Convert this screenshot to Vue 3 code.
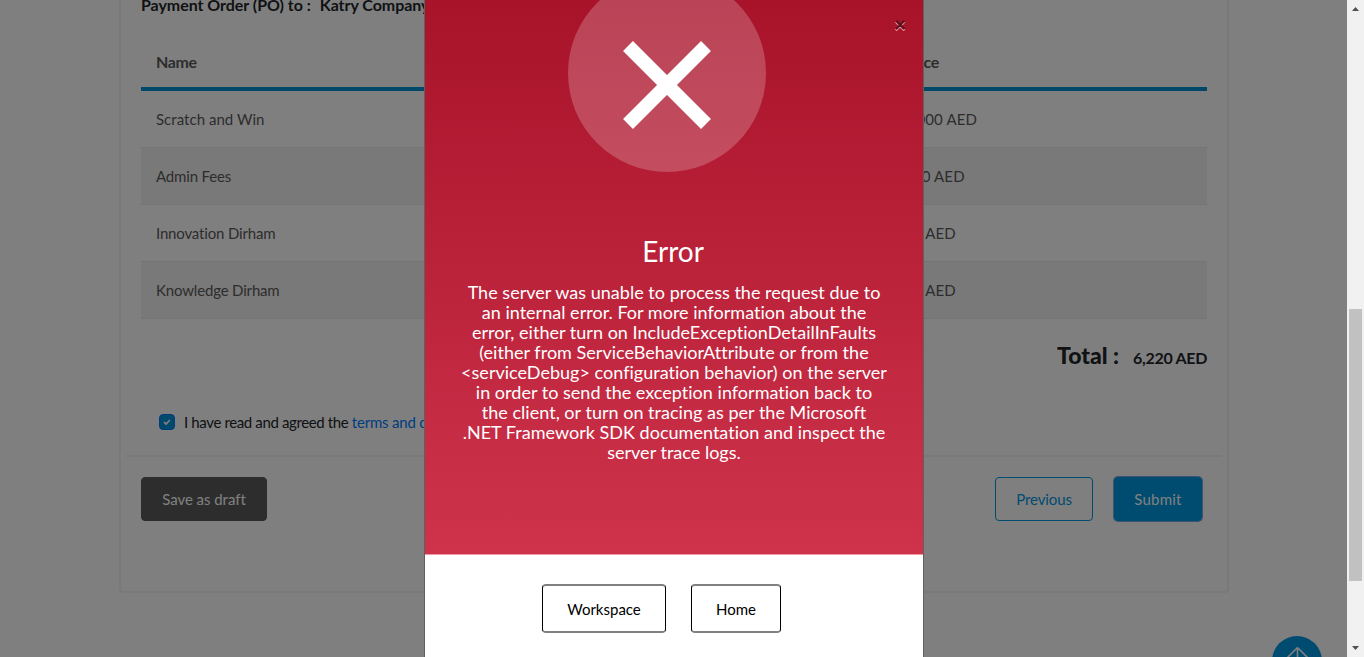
<script setup>
const rows = [
  { name: 'Scratch and Win', price: '6,000 AED' },
  { name: 'Admin Fees', price: '200 AED' },
  { name: 'Innovation Dirham', price: '10 AED' },
  { name: 'Knowledge Dirham', price: '10 AED' }
]
const message = [
  'The server was unable to process the request due to',
  'an internal error. For more information about the',
  'error, either turn on IncludeExceptionDetailInFaults',
  '(either from ServiceBehaviorAttribute or from the',
  '<serviceDebug> configuration behavior) on the server',
  'in order to send the exception information back to',
  'the client, or turn on tracing as per the Microsoft',
  '.NET Framework SDK documentation and inspect the',
  'server trace logs.'
]
</script>

<template>
  <div class="screen">
    <main class="page">
      <section class="card">
        <h2 class="heading"><span>Payment Order (PO) to :</span><span>Katry Company</span></h2>
        <table class="items">
          <thead>
            <tr><th class="name">Name</th><th class="cost">Price</th></tr>
          </thead>
          <tbody>
            <tr v-for="row in rows" :key="row.name">
              <td>{{ row.name }}</td>
              <td class="price">{{ row.price }}</td>
            </tr>
          </tbody>
        </table>
        <div class="total"><strong>Total :</strong><span>6,220 AED</span></div>
        <div class="terms">
          <span class="check">
            <svg viewBox="0 0 16 16" width="16" height="16"><path d="M4.6 8.2 L7 10.3 L11.3 5.7" fill="none" stroke="#fff" stroke-width="2" /></svg>
          </span>
          <span>I have read and agreed the <a>terms and conditions</a></span>
        </div>
        <hr class="rule" />
        <div class="actions">
          <button class="btn draft">Save as draft</button>
          <button class="btn previous">Previous</button>
          <button class="btn submit">Submit</button>
        </div>
      </section>
      <div class="to-top">
        <svg viewBox="0 0 50 50" width="50" height="50"><path d="M25.5 11.5 V40 M25.5 11.5 L14.5 22.5 M25.5 11.5 L36.5 22.5" fill="none" stroke="#fff" stroke-width="1.6" /></svg>
      </div>
    </main>
    <div class="backdrop"></div>
    <div class="modal">
      <div class="alert">
        <span class="close">×</span>
        <div class="disc">
          <svg viewBox="0 0 88 88" width="88" height="88"><path d="M5 5 L83 83 M83 5 L5 83" stroke="#fff" stroke-width="14" /></svg>
        </div>
        <h1 class="title">Error</h1>
        <p class="message"><span v-for="line in message" :key="line">{{ line }}</span></p>
      </div>
      <div class="footer">
        <button class="choice workspace">Workspace</button>
        <button class="choice home">Home</button>
      </div>
    </div>
    <div class="scrollbar">
      <svg viewBox="0 0 17 17" width="17" height="17"><path d="M5 11 L8.5 7 L12 11 Z" fill="#505050" /></svg>
      <div class="thumb"></div>
      <svg viewBox="0 0 17 17" width="17" height="17"><path d="M5 6 L12 6 L8.5 10 Z" fill="#505050" /></svg>
    </div>
  </div>
</template>

<style>
html, body { overflow: hidden; }
</style>

<style scoped>
* { box-sizing: border-box; }
.screen { position: relative; width: 1364px; height: 657px; overflow: hidden; font-family: Lato, "Liberation Sans", sans-serif; font-size: 15px; }
.page { width: 1347px; height: 657px; background: #fff; overflow: hidden; }
.card { width: 1110px; height: 603px; margin: -10px 0 0 119px; border: 2px solid #f3f3f3; border-radius: 4px; padding: 1px 20px 0; }
.heading { display: flex; gap: 9px; margin: 0; height: 24px; font-size: 16px; line-height: 24px; letter-spacing: -.04px; color: #212529; white-space: nowrap; }
.items { width: 1066px; margin-top: 18px; border-collapse: separate; border-spacing: 0; table-layout: fixed; color: #5a5a5a; }
.items th { height: 56px; padding: 0 15px; text-align: left; border-bottom: 4px solid #0090d0; font-size: 16px; letter-spacing: -.4px; }
.items th.name { width: 744px; }
.items th.cost { padding-left: 20px; }
.items td { height: 57px; padding: 0 15px; border-top: 1px solid #e8e8e8; letter-spacing: -.17px; }
.items td.price { padding-left: 19px; letter-spacing: .15px; }
.items tbody tr:first-child td:first-child { letter-spacing: .03px; }
.items tbody tr:first-child td { height: 56px; border-top: 0; }
.items tbody tr:last-child td { height: 58px; border-bottom: 1px solid #e8e8e8; }
.items tbody tr:nth-child(even) { background: #f2f2f2; }
.total { display: flex; justify-content: flex-end; align-items: baseline; gap: 14px; height: 36px; margin-top: 18px; color: #212529; font-weight: 700; font-size: 16px; letter-spacing: -.3px; }
.total strong { font-size: 23px; line-height: 36px; letter-spacing: 0; }
.terms { display: flex; align-items: center; gap: 9px; height: 24px; margin: 37px 0 0 18px; color: #212529; white-space: nowrap; letter-spacing: -.37px; }
.terms a { color: #007bff; letter-spacing: -.2px; }
.check { display: flex; width: 16px; height: 16px; background: #0090d8; border: 1px solid #007bff; border-radius: 4px; align-items: center; justify-content: center; flex: none; }
.rule { height: 2px; border: 0; margin: 21px -15px 0; background: #f3f3f3; }
.actions { display: flex; padding-top: 20px; }
.btn { height: 44px; border-radius: 4px; border: 1px solid; font: inherit; padding: 0; }
.draft { width: 126px; background: #5a5a5a; border-color: #5a5a5a; color: #fff; letter-spacing: -.05px; }
.previous { width: 98px; margin-left: auto; background: none; border-color: #0098e0; color: #0098e0; letter-spacing: -.1px; }
.submit { width: 88px; margin: 0 5px 0 21px; background: #0098e0; border-color: #0098e0; color: #fff; letter-spacing: .2px; box-shadow: 0 0 0 1px #7fa8e6; }
.to-top { width: 50px; height: 50px; margin: 43px 0 0 1272px; border-radius: 50%; background: #0098e0; }
.backdrop { position: absolute; inset: 0 17px 0 0; background: rgba(0, 0, 0, .5); }
.modal { position: absolute; left: 424px; top: 0; width: 500px; height: 657px; border: solid #606060; border-width: 0 1px; background: #fff; }
.alert { position: relative; height: 555px; border-bottom: 1px solid #ee98a5; background: linear-gradient(#a8132a, #cf334c); color: #fff; overflow: hidden; text-align: center; }
.close { position: absolute; left: 465px; top: 12px; width: 20px; font: 900 21px/24px Lato, sans-serif; color: #5c0e1b; text-shadow: 0 1px 0 #fbb; }
.disc { width: 198px; height: 198px; margin: -26px 0 0 143px; border-radius: 50%; background: rgba(255, 255, 255, .21); display: flex; align-items: center; justify-content: center; padding-top: 23px; }
.title { margin: 61px 0 0; height: 36px; font-size: 28px; line-height: 36px; font-weight: 400; padding-right: 2px; }
.message { margin: 13px 0 0; font-size: 18px; line-height: 20px; letter-spacing: .02px; }
.message span { display: block; white-space: nowrap; }
.footer { display: flex; padding: 29px 0 0 117px; gap: 25px; }
.choice { height: 49px; background: #fff; border: solid #000; border-width: 2px 1px; border-top-color: #808080; border-bottom-color: #808080; border-radius: 4px; font: inherit; padding: 0; color: #000; }
.workspace { width: 124px; }
.home { width: 90px; }
.scrollbar { position: absolute; right: 0; top: 0; width: 17px; height: 657px; background: #f1f1f1; display: flex; flex-direction: column; }
.scrollbar svg { display: block; }
.thumb { width: 13px; height: 272px; margin: 292px 2px 59px; background: #c1c1c1; }
</style>
